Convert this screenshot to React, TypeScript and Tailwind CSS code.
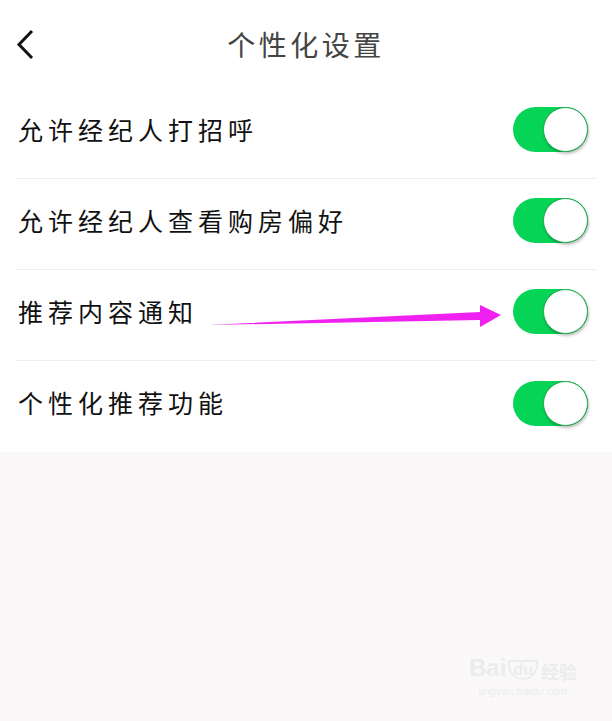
import React from "react";

const items = ["允许经纪人打招呼", "允许经纪人查看购房偏好", "推荐内容通知", "个性化推荐功能"];

const Toggle: React.FC = () => (
  <div className="relative w-[75px] h-[45px] rounded-full bg-[#06d456]">
    <div className="absolute right-0 top-0 w-[45px] h-[45px] rounded-full bg-white border border-[#1fa84c] shadow-[1px_2px_3px_rgba(0,0,0,0.25)]" />
  </div>
);

export default function App() {
  return (
    <div
      className="relative w-[612px] h-[721px] bg-[#faf8f9] overflow-hidden"
      style={{ fontFamily: '"Noto Sans CJK SC", "Noto Sans", sans-serif' }}
    >
      <div className="bg-white">
        <header className="relative h-[88px] flex items-center justify-center">
          <svg className="absolute left-[15px] top-[29px]" width="22" height="32" viewBox="0 0 22 32">
            <path d="M17 2 L4 15.5 L17 29" fill="none" stroke="#111" strokeWidth="3" />
          </svg>
          <h1 className="text-[28px] tracking-[3.5px] text-[#444] font-normal">个性化设置</h1>
        </header>

        {items.map((label, i) => (
          <div
            key={label}
            className={`ml-4 mr-[15px] h-[91px] flex items-center justify-between pr-[9px] pb-[7px] ${
              i < items.length - 1 ? "border-b border-[#eeeeee]" : ""
            }`}
          >
            <span className="pl-[2px] text-[25px] tracking-[5px] text-[#111]">{label}</span>
            <Toggle />
          </div>
        ))}
      </div>

      {/* annotation arrow */}
      <svg className="absolute left-0 top-0 pointer-events-none" width="612" height="721">
        <polygon points="208,325 480,312 480,305 501,315 480,327 480,320" fill="#f020f0" />
      </svg>

      {/* watermark */}
      <div className="absolute left-[469px] top-[656px] flex flex-col items-center text-[#ececec]">
        <div className="relative flex items-end leading-none">
          <span className="text-[24px] font-bold" style={{ fontFamily: '"Liberation Sans", sans-serif' }}>
            Bai
          </span>
          <span className="text-[16px] font-bold ml-[2px] px-[3px] rounded-b-full border-2 border-[#ececec]" style={{ fontFamily: '"Liberation Sans", sans-serif' }}>
            du
          </span>
          <span className="text-[18px] font-bold ml-[3px]">经验</span>
        </div>
        <span className="text-[11px] mt-[3px]" style={{ fontFamily: '"Liberation Sans", sans-serif' }}>
          jingyan.baidu.com
        </span>
      </div>
    </div>
  );
}
